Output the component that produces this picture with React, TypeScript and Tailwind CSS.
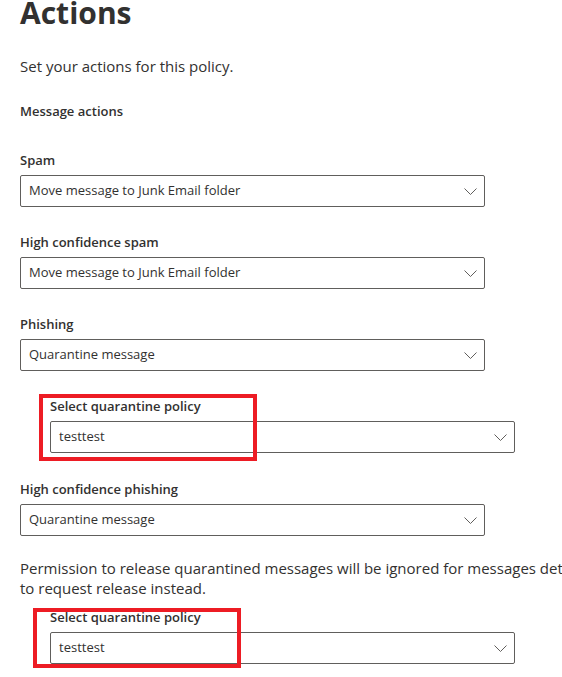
const font = { fontFamily: '"Open Sans", "Noto Sans", Arial, sans-serif' };

function Chevron() {
  return (
    <svg width="13" height="7" viewBox="0 0 13 7" fill="none">
      <polyline points="0.5,0.5 6.5,6.5 12.5,0.5" stroke="#605e5c" strokeWidth="1" />
    </svg>
  );
}

function Field({ label, value, children }: { label: string; value: string; children?: React.ReactNode }) {
  return (
    <div className="flex flex-col">
      <label className="mb-[5px] text-[13px] font-semibold leading-[20px] text-[#323130]">{label}</label>
      <div className="relative flex h-8 w-[465px] items-center justify-between rounded-[2px] border border-[#605e5c] bg-white pl-2 pr-[7px] text-[13px] text-[#323130]">
        <span>{value}</span>
        <Chevron />
        {children}
      </div>
    </div>
  );
}

export default function App() {
  return (
    <div className="h-[677px] w-[562px] overflow-hidden bg-white pl-5 text-[#323130]" style={font}>
      <h1 className="mt-[-9px] text-[30px] font-bold leading-[44px]">Actions</h1>
      <p className="mt-[21px] text-[15px] leading-[20px]">Set your actions for this policy.</p>
      <h2 className="mt-[25px] text-[13px] font-semibold leading-[20px]">Message actions</h2>

      <div className="mt-[29px] flex flex-col">
        <Field label="Spam" value="Move message to Junk Email folder" />
        <div className="mt-[25px]">
          <Field label="High confidence spam" value="Move message to Junk Email folder" />
        </div>
        <div className="mt-[25px]">
          <Field label="Phishing" value="Quarantine message" />
        </div>
        <div className="ml-[30px] mt-[25px]">
          <Field label="Select quarantine policy" value="testtest">
            <div className="pointer-events-none absolute left-[-12px] top-[-28px] h-[67px] w-[218px] border-4 border-[#ed1c24]" />
          </Field>
        </div>
        <div className="mt-[26px]">
          <Field label="High confidence phishing" value="Quarantine message" />
        </div>
      </div>

      <p className="mt-[22px] whitespace-nowrap text-[15px] leading-[20px]">
        Permission to release quarantined messages will be ignored for messages detected as high confidence phishing. Users will be allowed
        <br />
        to request release instead.
      </p>
      <div className="ml-[30px] mt-[9px]">
        <Field label="Select quarantine policy" value="testtest">
          <div className="pointer-events-none absolute left-[-18px] top-[-25px] h-[60px] w-[208px] border-4 border-[#ed1c24]" />
        </Field>
      </div>
    </div>
  );
}
